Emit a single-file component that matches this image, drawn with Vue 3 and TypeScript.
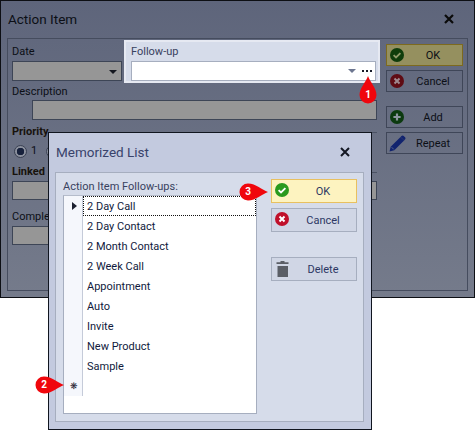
<script setup lang="ts">
const followUps = ['2 Day Call', '2 Day Contact', '2 Month Contact', '2 Week Call', 'Appointment', 'Auto', 'Invite', 'New Product', 'Sample']
</script>

<template>
  <div class="page">
    <div class="window">
      <div class="title-bar">
        <span>Action Item</span>
        <svg class="close" width="10" height="10" viewBox="0 0 10 10"><path d="M1 1l8 8M9 1l-8 8" stroke="#0a0a0a" stroke-width="2.2" fill="none" /></svg>
      </div>
      <div class="group">
        <div class="left">
          <div class="top-row">
            <div class="date">
              <label>Date</label>
              <div class="field combo"><i class="arrow"></i></div>
            </div>
            <div class="follow-panel">
              <label>Follow-up</label>
              <div class="follow-input">
                <i class="arrow light"></i>
                <span class="dots"><b></b><b></b><b></b></span>
              </div>
            </div>
          </div>
          <label class="desc-label">Description</label>
          <div class="field desc"></div>
          <div class="section"><strong>Priority</strong><hr /></div>
          <div class="radios">
            <span class="radio on"></span><span>1</span>
            <span class="radio"></span>
          </div>
          <div class="section linked"><strong>Linked</strong><hr /></div>
          <div class="field wide"></div>
          <label class="comp-label">Completed</label>
          <div class="field comp"></div>
        </div>
        <div class="side">
          <button class="btn dim-ok">
            <svg class="ico" width="14" height="14" viewBox="0 0 14 14"><circle cx="7" cy="7" r="7" fill="#0f3d0b" /><path d="M3.6 7.2l2.4 2.3 4.4-4.4" stroke="#8f9a6a" stroke-width="1.8" fill="none" /></svg>
            <span>OK</span>
          </button>
          <button class="btn">
            <svg class="ico" width="14" height="14" viewBox="0 0 14 14"><circle cx="7" cy="7" r="7" fill="#5f0c14" /><path d="M4.5 4.5l5 5M9.5 4.5l-5 5" stroke="#a08a90" stroke-width="2" fill="none" /></svg>
            <span>Cancel</span>
          </button>
          <button class="btn gap">
            <svg class="ico" width="14" height="14" viewBox="0 0 14 14"><circle cx="7" cy="7" r="7" fill="#0c3a0f" /><path d="M7 3.4v7.2M3.4 7h7.2" stroke="#8d96a0" stroke-width="2.2" fill="none" /></svg>
            <span>Add</span>
          </button>
          <button class="btn">
            <svg class="ico pencil" width="17" height="17" viewBox="0 0 17 17"><path d="M0.5 16.5l1.2-4.8L11.5 2l3.6 3.6-9.8 9.7z" fill="#11236e" /><path d="M12.4 1.1c.8-.8 1.6-.8 2.3-.1l1.3 1.3c.7.7.7 1.5-.1 2.3l-.8.8-3.5-3.5z" fill="#11236e" /><path d="M2.6 12.2l2.2 2.2" stroke="#6a7390" stroke-width=".8" /></svg>
            <span>Repeat</span>
          </button>
        </div>
      </div>
    </div>

    <div class="dialog">
      <div class="dialog-title">
        <span>Memorized List</span>
        <svg class="close" width="10" height="10" viewBox="0 0 10 10"><path d="M1 1l8 8M9 1l-8 8" stroke="#141824" stroke-width="2" fill="none" /></svg>
      </div>
      <div class="dialog-panel">
        <div class="list-col">
          <label class="list-label">Action Item Follow-ups:</label>
          <div class="list">
            <div class="rows">
              <div v-for="(item, i) in followUps" :key="item" class="row" :class="{ current: i === 0 }">
                <div class="indicator"><i v-if="i === 0" class="pointer"></i></div>
                <div class="cell">{{ item }}</div>
              </div>
              <div class="row">
                <div class="indicator star">❋</div>
                <div class="cell"></div>
              </div>
            </div>
          </div>
        </div>
        <div class="dialog-side">
          <button class="btn2 hot">
            <svg class="ico" width="14" height="14" viewBox="0 0 14 14"><circle cx="7" cy="7" r="7" fill="#2a9a1e" /><path d="M3.6 7.2l2.4 2.3 4.4-4.4" stroke="#fff" stroke-width="1.8" fill="none" /></svg>
            <span>OK</span>
          </button>
          <button class="btn2">
            <svg class="ico" width="14" height="14" viewBox="0 0 14 14"><circle cx="7" cy="7" r="7" fill="#c0102a" /><path d="M4.5 4.5l5 5M9.5 4.5l-5 5" stroke="#fff" stroke-width="2" fill="none" /></svg>
            <span>Cancel</span>
          </button>
          <button class="btn2 gap2">
            <svg class="ico trash" width="13" height="16" viewBox="0 0 13 16"><path d="M4.5 0h4v1.2h4V3H.5V1.2h4z" fill="#5a5e66" /><path d="M1.5 5h10.5v11H1.5z" fill="#5a5e66" /></svg>
            <span>Delete</span>
          </button>
        </div>
      </div>
    </div>

    <div class="callout c1">
      <svg width="18" height="28" viewBox="0 0 18 28"><path d="M9 0C11 6 17.5 12 17.5 19A8.5 8.5 0 0 1 .5 19C.5 12 7 6 9 0z" fill="#f0060c" /></svg>
      <span>1</span>
    </div>
    <div class="callout c2">
      <svg width="30" height="18" viewBox="0 0 30 18"><path d="M30 9C24 11 18 17.5 10 17.5A8.5 8.5 0 0 1 10 .5C18 .5 24 7 30 9z" fill="#f0060c" /></svg>
      <span>2</span>
    </div>
    <div class="callout c3">
      <svg width="30" height="18" viewBox="0 0 30 18"><path d="M30 9C24 11 18 17.5 10 17.5A8.5 8.5 0 0 1 10 .5C18 .5 24 7 30 9z" fill="#f0060c" /></svg>
      <span>3</span>
    </div>
  </div>
</template>

<style scoped>
.page {
  position: relative;
  width: 475px;
  height: 430px;
  overflow: hidden;
  background: #fff;
  font-family: Roboto, "Noto Sans", sans-serif;
  font-size: 11px;
  line-height: 14px;
  color: #0c0f16;
}
.window {
  box-sizing: border-box;
  width: 475px;
  height: 298px;
  border: 1px solid #0d0f14;
  background: linear-gradient(#5e657b, #757b8b);
  padding: 0 6px 6px;
  display: flex;
  flex-direction: column;
}
.title-bar {
  height: 37px;
  flex: none;
  display: flex;
  align-items: center;
  justify-content: space-between;
  font-size: 13.5px;
  padding: 0 14px 1px 1px;
  box-sizing: border-box;
}
.group {
  flex: 1;
  display: flex;
  border: 1px solid #454c5e;
}
.left {
  width: 372px;
  padding: 1px 0 0 4px;
  box-sizing: border-box;
}
label {
  display: block;
}
.top-row {
  display: flex;
  height: 44px;
}
.date {
  width: 112px;
  padding-top: 5px;
}
.date label {
  margin-bottom: 2px;
}
.field {
  box-sizing: border-box;
  height: 20px;
  background: #969696;
  border: 1px solid #3d4556;
  position: relative;
}
.combo {
  width: 110px;
}
.arrow {
  position: absolute;
  right: 4px;
  top: 8px;
  border: 4px solid transparent;
  border-top: 4px solid #14171f;
  border-bottom: 0;
}
.follow-panel {
  box-sizing: border-box;
  width: 256px;
  height: 43px;
  background: #d6dcea;
  border: 2px solid #e6e9f2;
  padding: 3px 3px 0 5px;
  color: #38415e;
}
.follow-panel label {
  margin-bottom: 2px;
}
.follow-input {
  box-sizing: border-box;
  height: 20px;
  width: 245px;
  background: #fff;
  border: 1px solid #a6aebf;
  position: relative;
}
.arrow.light {
  right: 19px;
  top: 7px;
  border-top-color: #6d7690;
}
.dots {
  position: absolute;
  right: 3px;
  top: 8px;
  display: flex;
  gap: 2px;
}
.dots b {
  width: 2px;
  height: 2px;
  background: #181b28;
}
.desc-label {
  padding-top: 1px;
}
.desc {
  width: 345px;
  margin: 1px 0 0 20px;
}
.section {
  display: flex;
  align-items: center;
  gap: 4px;
  width: 365px;
  margin-top: 5px;
  color: #17120c;
}
.section hr {
  flex: 1;
  margin: 0;
  border: 0;
  border-top: 1px solid #4b5264;
}
.radios {
  height: 20px;
  margin-top: 2px;
  display: flex;
  align-items: center;
  gap: 4px;
  padding-left: 2px;
}
.radio {
  box-sizing: border-box;
  width: 13px;
  height: 13px;
  border-radius: 50%;
  border: 1px solid #3b4254;
  background: #8a8f9c;
}
.radio.on {
  background: radial-gradient(circle, #17213c 0 3.5px, #8a8f9c 4px);
}
.radios span + span + span {
  margin-left: 5px;
}
.section.linked {
  margin-top: 4px;
}
.wide {
  width: 365px;
  margin-top: 2px;
  height: 19px;
}
.comp-label {
  margin-top: 10px;
}
.comp {
  width: 200px;
  margin-top: 2px;
  height: 19px;
}
.side {
  width: 77px;
  padding: 5px 0 0 6px;
}
.btn,
.btn2 {
  position: relative;
  box-sizing: border-box;
  display: flex;
  align-items: center;
  justify-content: center;
  font: inherit;
  padding: 1px 0 0 17px;
  width: 77px;
  height: 22px;
  margin-bottom: 4px;
  background: transparent;
  border: 1px solid #3f4658;
  color: #0c0f16;
}
.btn.gap {
  margin-top: 14px;
}
.dim-ok {
  background: #95905f;
  border-color: #7d6a1f;
}
.ico {
  position: absolute;
  left: 3px;
  top: 3px;
}
.ico.pencil {
  left: 2px;
  top: 2px;
}
.dialog {
  position: absolute;
  left: 48px;
  top: 132px;
  box-sizing: border-box;
  width: 324px;
  height: 298px;
  background: #c3cadf;
  border: 1px solid #10151f;
  padding: 0 7px 7px 6px;
  display: flex;
  flex-direction: column;
}
.dialog-title {
  height: 39px;
  flex: none;
  display: flex;
  align-items: center;
  justify-content: space-between;
  font-size: 13.5px;
  padding: 0 14px 1px 1px;
  box-sizing: border-box;
  color: #39436b;
}
.dialog-panel {
  flex: 1;
  display: flex;
  background: #d6dcea;
  border: 1px solid #a6aebf;
  padding: 0 6px 7px 7px;
}
.list-col {
  width: 194px;
  display: flex;
  flex-direction: column;
}
.list-label {
  height: 22px;
  line-height: 28px;
  color: #38415e;
}
.list {
  flex: 1;
  background: #fff;
  border: 1px solid #a6aebf;
  border-top-color: #b5bccb;
}
.row {
  display: flex;
  height: 20px;
}
.indicator {
  box-sizing: border-box;
  width: 19px;
  flex: none;
  background: #f5f7fc;
  border-right: 1px solid #c5cbd9;
  position: relative;
}
.pointer {
  position: absolute;
  left: 8px;
  top: 6px;
  border: 4px solid transparent;
  border-left: 5px solid #1c2030;
  border-right: 0;
}
.star {
  font-size: 9px;
  line-height: 20px;
  text-align: right;
  padding-right: 4px;
  color: #1c2030;
}
.cell {
  flex: 1;
  padding-left: 4px;
  line-height: 22px;
  color: #101a3c;
}
.row.current .cell {
  box-sizing: border-box;
  outline: 1px dotted #111;
  outline-offset: -1px;
}
.dialog-side {
  padding: 6px 0 0 14px;
}
.btn2 {
  width: 86px;
  height: 24px;
  margin-bottom: 5px;
  padding: 2px 0 0 18px;
  background: #d0d6e5;
  border: 1px solid #a6aebf;
  color: #2c3763;
}
.btn2.hot {
  background: #fdf3c0;
  border-color: #e8c060;
  color: #2c3763;
}
.btn2.gap2 {
  margin-top: 25px;
}
.ico.trash {
  left: 4px;
  top: 3px;
}
.callout {
  position: absolute;
  color: #fff;
  font-weight: 700;
  font-size: 10px;
  line-height: 14px;
}
.callout svg {
  display: block;
}
.callout span {
  position: absolute;
  text-align: center;
}
.c1 {
  left: 359px;
  top: 76px;
}
.c1 span {
  left: 0;
  width: 18px;
  top: 12px;
}
.c2 {
  left: 34px;
  top: 376px;
}
.c2 span {
  left: 3px;
  width: 14px;
  top: 2px;
}
.c3 {
  left: 238px;
  top: 183px;
}
.c3 span {
  left: 3px;
  width: 14px;
  top: 2px;
}
</style>
